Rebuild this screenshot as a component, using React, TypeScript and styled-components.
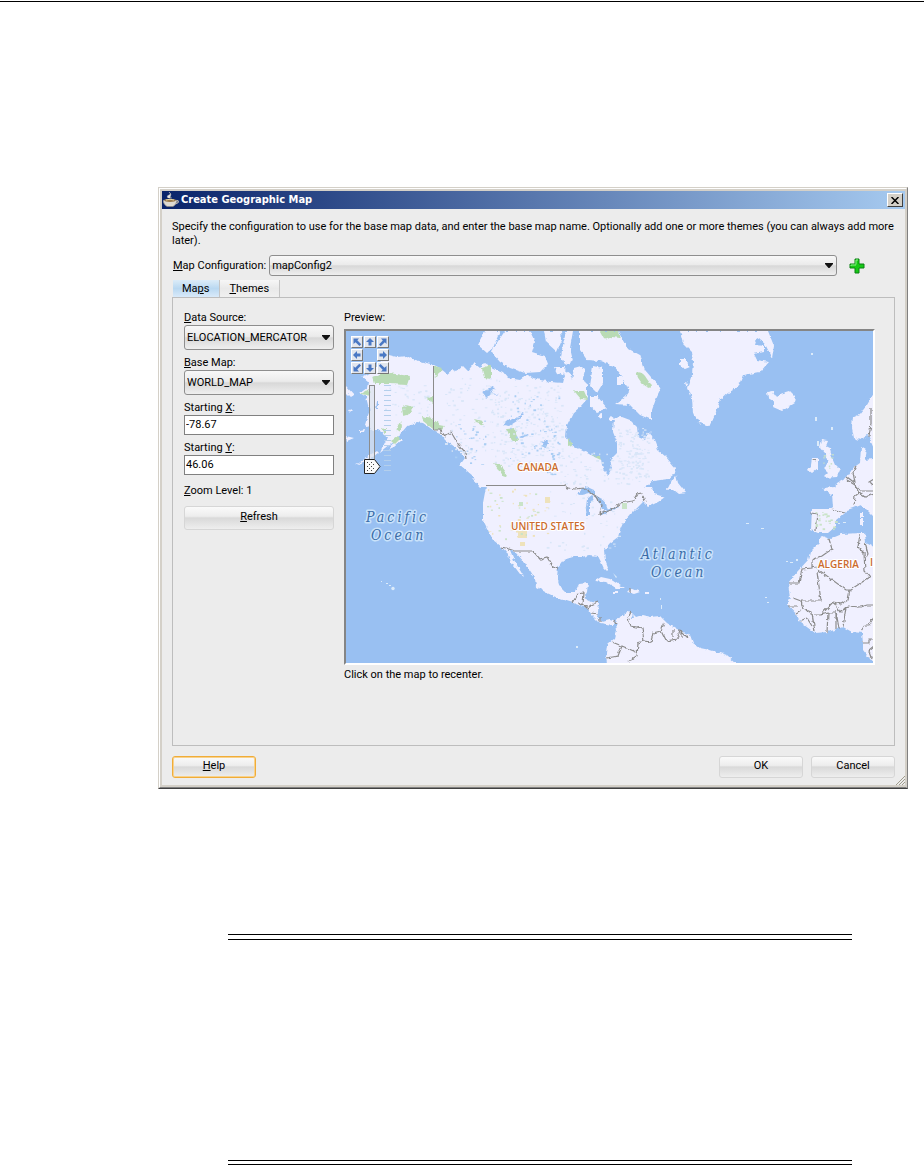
import React from "react";
import styled, { createGlobalStyle } from "styled-components";

const GlobalStyle = createGlobalStyle`
  *, *::before { box-sizing: border-box; }
  body { margin: 0; background: #fff; }
  body, button, input, select {
    font-family: Roboto, Tahoma, sans-serif;
    font-size: 11px;
    color: #000;
  }
`;

const Page = styled.main`
  display: flex;
  flex-direction: column;
`;

const TopRule = styled.hr`
  width: 100%;
  height: 1px;
  margin: 1px 0 185px;
  border: 0;
  background: #000;
`;

const Note = styled.section`
  height: 231px;
  margin: 145px 72px 0 228px;
  border: 0 solid #000;
  border-width: 1px 0;
  padding: 4px 0 3px;

  &::before {
    content: "";
    display: block;
    height: 100%;
    border: 0 solid #000;
    border-width: 1px 0;
  }
`;

const Dialog = styled.section`
  margin: 0 16px 0 158px;
  border: 1px solid;
  border-color: #d4d0c8 #808080 #404040 #d4d0c8;
`;

const DialogFrame = styled.div`
  border: 1px solid;
  border-color: #fff #d4d0c8 #808080 #fff;
  padding: 2px 1px 2px 2px;
  background: #d4d0c8;
`;

const TitleBar = styled.header`
  display: flex;
  align-items: center;
  gap: 2px;
  height: 18px;
  padding: 0 2px 0 1px;
  background: linear-gradient(90deg, #0a246a, #a6caf0);
`;

const Title = styled.h1`
  flex: 1;
  margin: 0;
  font-family: "DejaVu Sans Condensed", Tahoma, sans-serif;
  font-size: 11px;
  line-height: 18px;
  color: #fff;
`;

const CloseButton = styled.button`
  display: grid;
  place-items: center;
  width: 16px;
  height: 14px;
  padding: 0;
  border: 1px solid;
  border-color: #fff #404040 #404040 #fff;
  background: #d4d0c8;
`;

const Body = styled.div`
  position: relative;
  padding: 11px 10px 7px;
  background: #ececec;
`;

const Intro = styled.p`
  margin: 0;
  line-height: 14px;
`;

const ConfigRow = styled.div`
  display: flex;
  align-items: center;
  gap: 3px;
  margin: 7px 30px 4px 1px;
`;

const AddButton = styled.button`
  display: grid;
  place-items: center;
  width: 16px;
  height: 16px;
  margin-left: 9px;
  padding: 0;
  border: 0;
  background: none;
`;

const SelectBox = styled.div<{ $tall?: boolean }>`
  position: relative;
  flex: 1;
  height: ${(p) => (p.$tall ? 25 : 21)}px;

  svg {
    position: absolute;
    right: 4px;
    top: 50%;
    margin-top: -3px;
    pointer-events: none;
  }
`;

const Select = styled.select`
  appearance: none;
  display: block;
  width: 100%;
  height: 100%;
  padding: 0 14px 0 2px;
  border: 1px solid #8e8e8e;
  border-radius: 3px;
  background: linear-gradient(#f8f8f8, #ebebeb 45%, #d8d8d8 52%, #efefef);
`;

const Tabs = styled.div`
  display: flex;
  padding-left: 1px;
`;

const Tab = styled.button<{ $active?: boolean }>`
  height: 17px;
  padding: 0 10px 0 9px;
  border: 0;
  border-right: 1px solid #c4c4c4;
  line-height: 16px;
  background: ${(p) =>
    p.$active
      ? "linear-gradient(#dcecf8, #b9d8f1 50%, #d9eafa)"
      : "linear-gradient(#f6f6f6, #e9e9e9 50%, #f0f0f0)"};
`;

const Panel = styled.div`
  display: flex;
  align-items: flex-start;
  gap: 10px;
  height: 449px;
  padding: 12px 19px 0 11px;
  border: 1px solid #bdbdbd;
`;

const Fields = styled.form`
  display: flex;
  flex-direction: column;
  width: 150px;
`;

const Field = styled.div`
  display: flex;
  flex-direction: column;
  margin-bottom: 5px;
`;

const Label = styled.label`
  line-height: 15px;
  white-space: nowrap;
`;

const SelectField = styled(Field)`
  ${SelectBox} { flex: none; }
`;

const TextInput = styled.input`
  width: 100%;
  height: 20px;
  padding: 0 1px 2px;
  border: 1px solid #808080;
  background: #fff;
`;

const ZoomLevel = styled.div`
  margin: 3px 0 8px;
  line-height: 15px;
`;

const PushButton = styled.button<{ $focused?: boolean }>`
  width: 84px;
  height: 22px;
  padding: 0 0 2px;
  border: 1px solid ${(p) => (p.$focused ? "#f0ac38" : "#d6d6d6")};
  box-shadow: ${(p) => (p.$focused ? "inset 0 0 0 1px #f8d28c" : "none")};
  border-radius: 3px;
  line-height: 16px;
  background: linear-gradient(#fafafa, #ededed 42%, #d9d9d9 50%, #eee);
`;

const RefreshButton = styled(PushButton)`
  width: 100%;
  height: 24px;
`;

const Preview = styled.div`
  flex: 1;
  min-width: 0;
  display: flex;
  flex-direction: column;
`;

const MapFrame = styled.div`
  position: relative;
  margin: 4px 0 2px;
  border: 2px solid;
  border-color: #858585 #fff #fff #858585;
  background: #99c0f2;
`;

const MapDrawing = styled.svg`
  display: block;
  width: 100%;
`;

const PanPad = styled.div`
  position: absolute;
  left: 5px;
  top: 5px;
  display: grid;
  grid-template-columns: repeat(3, 12px);
  grid-auto-rows: 12px;
  gap: 1px;
`;

const PanButton = styled.button`
  display: grid;
  place-items: center;
  padding: 0;
  border: 1px solid;
  border-color: #fff #777 #777 #fff;
  background: #e2e6ee;
`;

const ZoomSlider = styled.div`
  position: absolute;
  left: 18px;
  top: 53px;
  width: 30px;
  height: 92px;

  input {
    position: absolute;
    inset: 0;
    width: 100%;
    height: 100%;
    margin: 0;
    opacity: 0;
    writing-mode: vertical-lr;
  }
`;

const Footer = styled.footer`
  display: flex;
  gap: 8px;
  margin-top: 10px;

  ${PushButton}:first-child { margin-right: auto; }
`;

const Grip = styled.svg`
  position: absolute;
  right: 0;
  bottom: 0;
`;

const Caret = () => (
  <svg width="8" height="5" viewBox="0 0 8 5"><path d="M0 0h8v1L4.500 5h-1L0 1z" fill="#111" /></svg>
);

const CupIcon = () => (
  <svg width="16" height="16" viewBox="0 0 16 16">
    <path d="M5 6Q3 4 6 3T6 0Q9 2 7.500 4T9 6" fill="#e6e6e6" stroke="#b5b5b5" strokeWidth=".6" />
    <path d="M13 9q3-1 2 1.500-1 1.500-4 1.500" fill="none" stroke="#cfc9bd" strokeWidth="1.200" />
    <path d="M0 8.500q7-3 14 0-.5 4-4 6H4Q.5 12.500 0 8.500z" fill="#dedad2" stroke="#8f8a80" strokeWidth=".6" />
    <ellipse cx="7" cy="8.300" rx="5.600" ry="1.600" fill="#9a7a4a" />
    <path d="M3 8q4-1.500 8 0" fill="none" stroke="#e9d9a8" />
  </svg>
);

const PlusIcon = () => (
  <svg width="16" height="16" viewBox="0 0 16 16">
    <path d="M6 1h4v5h5v4h-5v5H6v-5H1V6h5z" fill="#16c916" stroke="#0a8012" strokeLinejoin="round" />
    <path d="M7 6.500V2h2M2 8V7h5" fill="none" stroke="#8df58a" />
  </svg>
);

const PanArrow = ({ angle }: { angle: number }) => (
  <svg width="10" height="10" viewBox="0 0 10 10">
    {angle % 90 === 0 ? (
      <path transform={`rotate(${angle} 5 5)`} d="M5 1l4 4H6.5v3.5h-3V5H1z" fill="#4a78c4" />
    ) : (
      <path transform={`rotate(${angle - 45} 5 5)`} d="M3 1.5h5.5V7L6.8 5.3 2.700 9.200 1 7.500l3.800-4z" fill="#4a78c4" />
    )}
  </svg>
);

const panDirections: ([string, number] | null)[] = [
  ["Pan northwest", -45], ["Pan north", 0], ["Pan northeast", 45],
  ["Pan west", -90], null, ["Pan east", 90],
  ["Pan southwest", 225], ["Pan south", 180], ["Pan southeast", 135],
];

const land = [
  // North and Central America
  "M389 355L397 357 407 356 412 359 434 365 440 368 447 374 452 370 456 372 463 366 468 371 474 363 480 368 485 363 493 368 503 372 508 378 520 380 528 374 533 378 550 382 563 383 565 375 562 368 570 374 572 380 574 368 581 366 585 370 583 378 587 385 587 392 588 398 580 407 573 413 567 425 566 437 572 445 583 450 592 456 601 459 602 465 604 471 608 475 612 468 610 460 617 453 617 442 613 432 614 418 622 417 630 420 637 427 638 437 645 440 650 432 655 442 658 450 666 457 675 468 673 475 668 479 653 481 644 488 652 488 654 494 665 497 658 502 648 507 643 502 637 508 632 513 623 523 620 530 618 537 610 543 604 550 605 560 608 568 605 571 601 562 598 556 590 555 583 557 573 557 563 560 558 567 557 577 560 587 565 592 575 592 579 584 588 583 587 592 584 598 592 602 599 603 598 612 597 617 602 622 610 620 616 622 613 625 606 624 600 623 592 615 587 608 573 603 560 599 547 593 536 587 535 578 525 563 515 552 510 550 514 560 524 577 520 574 511 562 507 553 502 547 493 540 483 520 483 503 486 487 480 485 473 476 460 465 465 458 455 447 445 440 440 433 433 430 423 423 417 422 408 425 402 432 398 438 390 445 380 453 387 438 383 433 378 430 372 430 365 425 367 418 370 410 368 405 366 397 360 393 367 388 368 382 362 377 370 373 380 362z",
  // Arctic islands
  "M485 331L478 345 487 353 493 348 500 331z",
  "M505 331L494 347 492 353 500 362 510 368 525 373 540 372 548 364 545 356 532 352 535 342 530 331z",
  "M544 331L561 331 562 340 557 352 546 342z",
  "M566 331L573 331 570 348 573 361 566 366 561 358 562 350z",
  "M554 367L565 367 563 375 557 373zM617 377L623 377 623 384 617 384z",
  "M580 331L618 331 627 348 640 355 645 370 651 377 661 388 657 396 652 410 652 420 640 415 630 405 615 404 625 397 629 391 622 376 614 366 600 361 587 360 580 350z",
  "M593 366L603 368 603 383 597 393 590 386z",
  "M590 396L597 396 607 408 597 412 590 406z",
  "M598 415l4-1 0 3-4 1zM609 418l4-1 1 3-4 0z",
  // Greenland, Iceland
  "M680 331L683 343 692 352 693 362 692 375 688 388 692 398 693 413 700 423 710 426 715 415 720 400 728 393 738 387 743 375 760 372 769 362 757 360 754 354 764 352 764 346 755 345 757 338 764 342 772 358 774 346 768 331z",
  "M680 359l6 0 4 8-5 2-5-4zM684 382l5 1-3 4z",
  "M767 392L772 391 776 397 780 394 790 391 796 397 795 403 782 411 773 407 775 402 768 398z",
  // Newfoundland, Alaskan and Pacific coast islands
  "M667 490L672 480 676 475 678 483 686 493 679 494 674 490z",
  "M472 478l4 1 8 8-3 1zM346 386l8 9-3 2-5-5zM348 410l6-1-4 4zM402 440l-8 7-5 2 8-9zM346 436l8 2-7 3zM360 430l5-1-1 3-4 0zM378 453l-8 6-9 4-6 3 12-9 9-6z",
  // Caribbean
  "M595 581L601 577 610 579 624 588 616 588 606 582zM627 592L631 588 640 592 634 594zM613 592h5v2h-5zM645 592h4v2h-4z",
  // South America
  "M616 622L621 616 627 612 632 613 636 617 642 615 650 617 660 616 667 623 677 629 690 635 693 643 700 648 710 650 727 655 737 664 607 664 606 653 607 645 615 638 617 630z",
  // Britain and Ireland
  "M822 440L828 441 826 446 830 448 832 458 835 465 840 470 837 477 823 478 828 473 823 468 828 463 825 453 820 447z",
  "M812 458L818 458 818 468 812 473 808 470 811 465z",
  // Europe
  "M874 393L867 405 860 414 853 417 852 428 854 438 860 440 868 435 874 449z",
  "M874 459L864 460 866 450 861 447 860 463 853 468 847 477 837 483 835 487 823 488 832 495 833 507 830 509 812 509 811 530 818 533 828 533 835 527 835 522 845 513 847 510 853 508 860 505 865 508 874 517z",
  "M860 512l3 0 0 5-3 0zM860 518l3 0 0 7-3 0z",
  // Africa
  "M819 538L822 536 830 539 842 534 860 533 865 533 866 543 874 547 874 664 863 650 863 643 862 633 852 632 843 627 828 632 815 633 800 622 797 615 788 605 790 597 788 583 797 572 808 560 810 552 819 543z",
].join("");

const borders = [
  "M502 547L515 551 533 551 540 559 547 557 553 567 559 569",
  "M434 430L440 430 445 436 451 432 458 444 465 452 466 459",
  "M565 485L567 488 575 489 584 488 597 497 602 505 600 514 611 510 620 503 633 501 637 494 642 493 645 502",
  "M573 603L578 594 583 593 582 604 587 608 591 605 598 602M579 604l8 2M591 613l7 1M600 617v5M614 621l2 3",
  "M631 612L628 618 631 626 642 628 644 641 651 642 653 633 661 631 664 623M661 631L666 641 677 639 680 630 688 638M673 629v9M682 630v8M644 641L638 643 637 656 628 662M612 642L622 646 636 652M622 646L618 656 607 658",
  "M630 588v5",
  "M811 513L817 514 815 530M832 509L845 512M847 480L855 485 859 493 855 496 854 506M847 477L855 483 853 472 856 466M855 484L861 491 874 491M859 493L865 497 874 494M871 407L871 424 869 437M874 479L869 482 872 485M812 460l4 1",
  "M829 539L832 549 822 556 812 560 812 568 802 569 799 583 788 583M817 572L821 601 801 601 793 598M812 565L846 590 850 590 870 577 865 571 864 553 858 547 860 534M850 590L848 600 841 604 833 602 821 615M801 601L803 609 796 613M788 606h10M803 609L812 613 815 632M800 621l7-3 5 8M821 615h-7M821 615l7-2 8 0 0 16M828 613l-1 19M836 611l3 18M846 607L843 627M834 602l7 10 6-6 14 1 6-2 7 0M861 631l4-6 4 0 5-8M863 643h6v-4h5M865 543l3 11-3 5M872 659l-3-8 5-4",
].join("");

const parks =
  "M372 377L388 373 410 376 407 385 390 384 374 384zM434 366L442 368 437 377 434 376zM401 408l5-3 7 2-5 8-6 1zM426 397l8-1-1 8zM422 416l10 2 8 7 5 1-4 5-8-2-10-8zM396 430l5-8 1 4-3 6zM391 441l6-4 3 2-5 5zM361 394l8-5 2 7zM382 429l4-1 0 7zM482 368l9-3 0 14-7-1zM600 331l18 0 2 7-8-1-7 3zM636 373q6-3 11 6 6 8 3 9-10-3-14-15zM574 391l10 0 4 9-7-1zM507 429l8-1 3 13-6 0zM474 419l8 2 3 4-9-3zM494 463l5 1 8 11-3 2zM568 438l4 7-4 1zM590 455l10 1 1 4z";

const lakes =
  "M481 392l8-3 2-3 4 1-5 5 8 3-7-1-5 5-2-5zM503 425l8-6 6-1 5-5 2 1-7 7-8 5zM519 437l8-3 2 1-8 3zM544 440l4 2-2 6-4-1zM576 494l9-8 9 4 1 6-5-3-9 2zM587 499l5-4 2 2-4 6 0 12-4 0 0-8zM595 495l9 5 4 10-5 0-3-6zM600 514l9-5 3 0-9 6zM610 509l7-3 1 1-7 4zM377 401l1 0 0 8-2 0zM633 613l1 6-3 0z";

type Speck = { x: number; y: number; w: number; h: number };

function scatter(seed: number, count: number, x: number, y: number, w: number, h: number): Speck[] {
  let s = seed;
  const next = () => (s = (s * 16807) % 2147483647) / 2147483647;
  return Array.from({ length: count }, () => ({
    x: x + next() * w,
    y: y + next() * h,
    w: 1 + next() * 2,
    h: 0.6 + next() * 1.4,
  }));
}

const Specks = ({ items, fill }: { items: Speck[]; fill: string }) => (
  <g fill={fill}>
    {items.map((i, n) => <rect key={n} x={i.x} y={i.y} width={i.w} height={i.h} />)}
  </g>
);

const paleLakes = [
  ...scatter(11, 230, 490, 385, 72, 82),
  ...scatter(23, 110, 618, 428, 30, 50),
  ...scatter(37, 90, 445, 378, 60, 75),
  ...scatter(41, 80, 560, 452, 80, 32),
  ...scatter(43, 40, 385, 385, 46, 36),
  ...scatter(47, 45, 545, 490, 75, 60),
];
const blueLakes = [...scatter(53, 45, 510, 390, 50, 70), ...scatter(59, 22, 540, 440, 20, 35), ...scatter(67, 30, 455, 420, 30, 45)];
const plains = [...scatter(61, 38, 488, 488, 60, 48), { x: 518, y: 531, w: 9, h: 7 }, { x: 545, y: 497, w: 5, h: 6 }, { x: 520, y: 542, w: 5, h: 4 }];
const woods = [...scatter(71, 26, 487, 489, 50, 50), ...scatter(73, 22, 815, 511, 20, 18), ...scatter(79, 8, 823, 448, 9, 24), { x: 519, y: 502, w: 4, h: 4 }, { x: 622, y: 503, w: 5, h: 6 }];

const WorldMap = () => (
  <MapDrawing viewBox="346 331 527 332" role="img" aria-label="Map preview">
    <defs>
      <filter id="coast" x="0" y="0" width="100%" height="100%" colorInterpolationFilters="sRGB">
        <feTurbulence type="fractalNoise" baseFrequency="0.22" numOctaves="2" seed="4" />
        <feDisplacementMap in="SourceGraphic" scale="4" xChannelSelector="R" yChannelSelector="G" />
      </filter>
    </defs>
    <rect x="346" y="331" width="527" height="332" fill="#99c0f2" />
    <g filter="url(#coast)">
      <rect x="340" y="325" width="540" height="345" fill="#99c0f2" />
      <path d={land} fill="#f0f0ff" />
      <path d={lakes} fill="#99c0f2" />
      <path d={parks} fill="#b9dbb5" />
      <path d={borders} fill="none" stroke="#8b8b8b" strokeWidth="1.200" />
    </g>
    <Specks items={paleLakes} fill="#d9e6f8" />
    <Specks items={blueLakes} fill="#a9cdf3" />
    <Specks items={plains} fill="#eee2bb" />
    <Specks items={woods} fill="#c9e3c8" />
    <g fill="#dcebfa">
      <circle cx="393" cy="588.500" r="1.700" />
      <path d="M381 581h1v1h-1zM386 583h2v1h-2zM389 585h2v1h-2zM576 646h2v2h-2zM746 523h3v1h-3zM761 528h3v1h-3zM786 561h2v1h-2zM790 562h3v1h-3zM796 559h2v2h-2zM765 597h2v1h-2zM767 602h2v1h-2zM811 353h2v2h-2zM815 417h2v4h-2zM831 427h2v3h-2zM817 441h2v5h-2zM838 523h2v1h-2zM843 522h3v1h-3zM613 573l4 4-1 1zM660 598h1v2h-1zM661 605h1v4h-1z" />
    </g>
    <path d="M433.500 366V430M486 485.500H565" fill="none" stroke="#8b8b8b" />
    <g fontFamily='"Open Sans", "Noto Sans", sans-serif' fontSize="10" fontWeight="600" fill="#cb6b2c" stroke="#fff" strokeWidth="2" paintOrder="stroke">
      <text x="517" y="471">CANADA</text>
      <text x="511" y="530">UNITED STATES</text>
      <text x="818" y="568">ALGERIA</text>
      <text x="870" y="566">I</text>
    </g>
    <g fontFamily='"DejaVu Serif Condensed", "Liberation Serif", serif' fontSize="14" fontStyle="italic" letterSpacing="3" fill="#3a6ca8" stroke="#c9e2fa" strokeWidth="3" strokeLinejoin="round" paintOrder="stroke">
      <text x="366" y="522">Pacific</text>
      <text x="371" y="540">Ocean</text>
      <text x="641" y="559">Atlantic</text>
      <text x="651" y="577">Ocean</text>
    </g>
  </MapDrawing>
);

const SliderDrawing = () => (
  <svg width="30" height="92" viewBox="364 384 30 92">
    <path d={Array.from({ length: 18 }, (_, i) => `M384 ${385.5 + i * 5}h7`).join("")} stroke="#b4cfec" />
    <rect x="369.500" y="385.500" width="5" height="80" fill="#dce2ee" fillOpacity=".7" stroke="#8c8c8c" />
    <path d="M364.500 459.500h10l5.500 7-5.500 7h-10z" fill="#fafafa" stroke="#222" />
    <path d="M367 462h1v1h-1zM371 462h1v1h-1zM369 464h1v1h-1zM373 464h1v1h-1zM367 466h1v1h-1zM371 466h1v1h-1zM369 468h1v1h-1zM373 468h1v1h-1zM367 470h1v1h-1zM371 470h1v1h-1z" fill="#444" />
  </svg>
);

export default function App() {
  return (
    <Page>
      <GlobalStyle />
      <TopRule />
      <Dialog role="dialog" aria-labelledby="dialog-title">
        <DialogFrame>
          <TitleBar>
            <CupIcon />
            <Title id="dialog-title">Create Geographic Map</Title>
            <CloseButton type="button" aria-label="Close">
              <svg width="8" height="7" viewBox="0 0 8 7"><path d="M.5 0l7 7M7.500 0l-7 7" stroke="#000" strokeWidth="1.500" /></svg>
            </CloseButton>
          </TitleBar>
          <Body>
            <Intro>
              Specify the configuration to use for the base map data, and enter the base map name. Optionally add one or more themes (you can always add more later).
            </Intro>
            <ConfigRow>
              <Label htmlFor="config"><u>M</u>ap Configuration:</Label>
              <SelectBox>
                <Select id="config"><option>mapConfig2</option></Select>
                <Caret />
              </SelectBox>
              <AddButton type="button" aria-label="Add map configuration"><PlusIcon /></AddButton>
            </ConfigRow>
            <Tabs role="tablist">
              <Tab type="button" role="tab" aria-selected="true" $active>Ma<u>p</u>s</Tab>
              <Tab type="button" role="tab" aria-selected="false"><u>T</u>hemes</Tab>
            </Tabs>
            <Panel role="tabpanel">
              <Fields>
                <SelectField>
                  <Label htmlFor="source"><u>D</u>ata Source:</Label>
                  <SelectBox $tall>
                    <Select id="source"><option>ELOCATION_MERCATOR</option></Select>
                    <Caret />
                  </SelectBox>
                </SelectField>
                <SelectField>
                  <Label htmlFor="base"><u>B</u>ase Map:</Label>
                  <SelectBox $tall>
                    <Select id="base"><option>WORLD_MAP</option></Select>
                    <Caret />
                  </SelectBox>
                </SelectField>
                <Field>
                  <Label htmlFor="start-x">Starting <u>X</u>:</Label>
                  <TextInput id="start-x" defaultValue="-78.67" />
                </Field>
                <Field>
                  <Label htmlFor="start-y">Starting <u>Y</u>:</Label>
                  <TextInput id="start-y" defaultValue="46.06" />
                </Field>
                <ZoomLevel><u>Z</u>oom Level: 1</ZoomLevel>
                <RefreshButton type="button"><u>R</u>efresh</RefreshButton>
              </Fields>
              <Preview>
                <Label as="span">Preview:</Label>
                <MapFrame>
                  <WorldMap />
                  <PanPad>
                    {panDirections.map((d, i) =>
                      d ? <PanButton key={i} type="button" aria-label={d[0]}><PanArrow angle={d[1]} /></PanButton> : <span key={i} />
                    )}
                  </PanPad>
                  <ZoomSlider>
                    <SliderDrawing />
                    <input type="range" min="1" max="18" defaultValue="1" aria-label="Zoom level" />
                  </ZoomSlider>
                </MapFrame>
                <Label as="span">Click on the map to recenter.</Label>
              </Preview>
            </Panel>
            <Footer>
              <PushButton type="button" $focused><u>H</u>elp</PushButton>
              <PushButton type="button">OK</PushButton>
              <PushButton type="button">Cancel</PushButton>
            </Footer>
            <Grip width="10" height="10" viewBox="0 0 10 10">
              <path d="M1 10l9-9M4 10l6-6M7 10l3-3" stroke="#a09c8c" />
            </Grip>
          </Body>
        </DialogFrame>
      </Dialog>
      <Note />
    </Page>
  );
}
